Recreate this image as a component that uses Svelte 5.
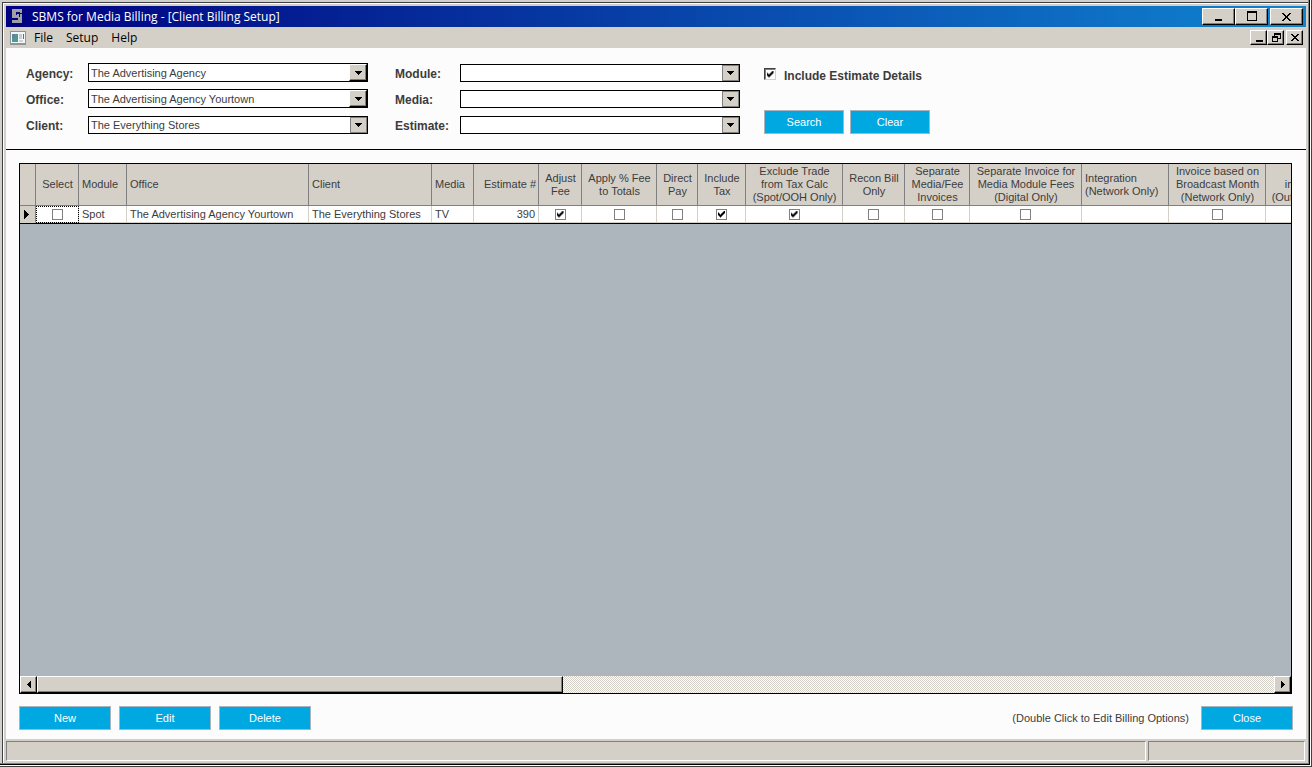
<script lang="ts">
    let agency = $state("The Advertising Agency");
    let office = $state("The Advertising Agency Yourtown");
    let client = $state("The Everything Stores");
    let module = $state("");
    let media = $state("");
    let estimate = $state("");
    let includeDetails = $state(true);

    const columns = [
        { key: "select", title: "Select", width: 43, align: "center", check: true },
        { key: "module", title: "Module", width: 48, align: "left" },
        { key: "office", title: "Office", width: 182, align: "left" },
        { key: "client", title: "Client", width: 123, align: "left" },
        { key: "media", title: "Media", width: 42, align: "left" },
        { key: "estimate", title: "Estimate #", width: 65, align: "right" },
        { key: "adjustFee", title: "Adjust\nFee", width: 43, align: "center", check: true },
        { key: "applyFee", title: "Apply % Fee\nto Totals", width: 75, align: "center", check: true },
        { key: "directPay", title: "Direct\nPay", width: 41, align: "center", check: true },
        { key: "includeTax", title: "Include\nTax", width: 48, align: "center", check: true },
        { key: "excludeTrade", title: "Exclude Trade\nfrom Tax Calc\n(Spot/OOH Only)", width: 97, align: "center", check: true },
        { key: "reconBill", title: "Recon Bill\nOnly", width: 62, align: "center", check: true },
        { key: "separateFee", title: "Separate\nMedia/Fee\nInvoices", width: 65, align: "center", check: true },
        { key: "separateModule", title: "Separate Invoice for\nMedia Module Fees\n(Digital Only)", width: 112, align: "center", check: true },
        { key: "integration", title: "Integration\n(Network Only)", width: 87, align: "left" },
        { key: "broadcastMonth", title: "Invoice based on\nBroadcast Month\n(Network Only)", width: 97, align: "center", check: true },
        { key: "outdoor", title: "\nin Invoice\n(Outdoor Only)", width: 84, align: "center", check: true },
    ];

    let rows: Record<string, any>[] = $state([
        {
            module: "Spot",
            office: "The Advertising Agency Yourtown",
            client: "The Everything Stores",
            media: "TV",
            estimate: "390",
            integration: "",
            select: false,
            adjustFee: true,
            applyFee: false,
            directPay: false,
            includeTax: true,
            excludeTrade: true,
            reconBill: false,
            separateFee: false,
            separateModule: false,
            broadcastMonth: false,
            outdoor: false,
        },
    ]);

    const gridWidth = 16 + columns.reduce((sum, c) => sum + c.width, 0);

    function clearFilters() {
        agency = office = client = module = media = estimate = "";
        includeDetails = false;
    }
</script>

{#snippet arrow(raised: boolean)}
    <span class="arrow" class:raised>
        <svg width="7" height="4" viewBox="0 0 7 4"><path d="M0 0h7v1h-1v1h-1v1h-1v1h-1v-1h-1v-1h-1v-1h-1z" /></svg>
    </span>
{/snippet}

<div class="window">
    <header class="titlebar">
        <svg class="logo" width="12" height="15" viewBox="0 0 12 15">
            <path fill="#a0a0a0" d="M0 0h10v4h-2v-1h-4v3h3v3h-7z M5 5h5v9h-10v-3h6v-3h-1z" />
            <path fill="#000084" d="M4 5h1v1h-1z M7 5h1v3h-1z M0 9h6v1h-6z" />
        </svg>
        <h1>SBMS for Media Billing - [Client Billing Setup]</h1>
        <div class="controls">
            <button aria-label="Minimize">
                <svg width="12" height="11" viewBox="0 0 12 11"><path d="M2 8h7v2h-7z" /></svg>
            </button>
            <button aria-label="Maximize">
                <svg width="12" height="11" viewBox="0 0 12 11"><path fill-rule="evenodd" d="M1 0h10v10h-10z M2 2h8v7h-8z" /></svg>
            </button>
            <button class="close" aria-label="Close window">
                <svg width="9" height="8" viewBox="0 0 9 8"><path d="M0 0h2v1h1v1h1v1h1v-1h1v-1h1v-1h2v1h-1v1h-1v1h-1v2h1v1h1v1h1v1h-2v-1h-1v-1h-1v-1h-1v1h-1v1h-1v1h-2v-1h1v-1h1v-1h1v-2h-1v-1h-1v-1h-1z" /></svg>
            </button>
        </div>
    </header>

    <nav class="menubar">
        <svg class="form-icon" width="16" height="14" viewBox="0 0 16 14">
            <rect width="16" height="14" fill="#8f949c" />
            <rect x="1" y="1" width="14" height="11" fill="#f5f6f8" />
            <rect x="2" y="3" width="6" height="8" fill="#4f9a8c" />
            <rect x="2" y="3" width="3" height="4" fill="#5c86a8" />
            <rect x="9" y="3" width="3" height="5" fill="#c9ccd0" />
            <rect x="13" y="3" width="1" height="5" fill="#5b6f86" />
            <rect x="9" y="9" width="4" height="2" fill="#d2d4d8" />
        </svg>
        <button class="menu">File</button>
        <button class="menu">Setup</button>
        <button class="menu">Help</button>
        <div class="controls small">
            <button aria-label="Minimize form">
                <svg width="10" height="9" viewBox="0 0 10 9"><path d="M2 7h7v2h-7z" /></svg>
            </button>
            <button aria-label="Restore form">
                <svg width="10" height="9" viewBox="0 0 10 9"><path fill-rule="evenodd" d="M3 0h7v6h-3v-1h2v-3h-5v1h-1z M1 3h6v6h-6z M2 5v3h4v-3z" /></svg>
            </button>
            <button class="close" aria-label="Close form">
                <svg width="8" height="7" viewBox="0 0 8 7"><path d="M0 0h2v1h1v1h2v-1h1v-1h2v1h-1v1h-1v1h-1v1h1v1h1v1h1v1h-2v-1h-1v-1h-2v1h-1v1h-2v-1h1v-1h1v-1h1v-1h-1v-1h-1v-1h-1z" /></svg>
            </button>
        </div>
    </nav>

    <section class="filters">
        <div class="fields">
            <label for="agency">Agency:</label>
            <div class="combo tall">
                <select id="agency" bind:value={agency}>
                    <option value=""></option>
                    <option>The Advertising Agency</option>
                </select>
                {@render arrow(true)}
            </div>
            <label for="office">Office:</label>
            <div class="combo tall">
                <select id="office" bind:value={office}>
                    <option value=""></option>
                    <option>The Advertising Agency Yourtown</option>
                </select>
                {@render arrow(true)}
            </div>
            <label for="client">Client:</label>
            <div class="combo">
                <select id="client" bind:value={client}>
                    <option value=""></option>
                    <option>The Everything Stores</option>
                </select>
                {@render arrow(false)}
            </div>
        </div>

        <div class="fields second">
            <label for="module">Module:</label>
            <div class="combo">
                <select id="module" bind:value={module}>
                    <option value=""></option>
                    <option>Spot</option>
                </select>
                {@render arrow(false)}
            </div>
            <label for="media">Media:</label>
            <div class="combo">
                <select id="media" bind:value={media}>
                    <option value=""></option>
                    <option>TV</option>
                </select>
                {@render arrow(false)}
            </div>
            <label for="estimate">Estimate:</label>
            <div class="combo">
                <select id="estimate" bind:value={estimate}>
                    <option value=""></option>
                    <option>390</option>
                </select>
                {@render arrow(false)}
            </div>
        </div>

        <div class="actions">
            <label class="details">
                <input type="checkbox" class="sunken" bind:checked={includeDetails} />
                Include Estimate Details
            </label>
            <div class="buttons">
                <button class="action">Search</button>
                <button class="action" onclick={clearFilters}>Clear</button>
            </div>
        </div>
    </section>

    <main>
        <div class="grid">
            <div class="grid-body">
                <table style="width: {gridWidth}px">
                    <colgroup>
                        <col class="marker-col" />
                        {#each columns as col}
                            <col style="width: {col.width}px" />
                        {/each}
                    </colgroup>
                    <thead>
                        <tr>
                            <th></th>
                            {#each columns as col}
                                <th class={col.align}>{col.title}</th>
                            {/each}
                        </tr>
                    </thead>
                    <tbody>
                        {#each rows as row}
                            <tr>
                                <td class="marker">
                                    <svg width="5" height="9" viewBox="0 0 5 9"><path d="M0 0h1v1h1v1h1v1h1v1h1v1h-1v1h-1v1h-1v1h-1v1h-1z" /></svg>
                                </td>
                                {#each columns as col}
                                    <td class={col.align} class:focused={col.key == "select"}>
                                        {#if col.check}
                                            <input type="checkbox" aria-label={col.title} bind:checked={row[col.key]} />
                                        {:else}
                                            {row[col.key]}
                                        {/if}
                                    </td>
                                {/each}
                            </tr>
                        {/each}
                    </tbody>
                </table>
            </div>
            <div class="scrollbar">
                <button aria-label="Scroll left">
                    <svg width="4" height="7" viewBox="0 0 4 7"><path d="M4 0v7h-1v-1h-1v-1h-1v-1h-1v-1h1v-1h1v-1h1v-1z" /></svg>
                </button>
                <div class="track"><div class="thumb"></div></div>
                <button aria-label="Scroll right">
                    <svg width="4" height="7" viewBox="0 0 4 7"><path d="M0 0v7h1v-1h1v-1h1v-1h1v-1h-1v-1h-1v-1h-1v-1z" /></svg>
                </button>
            </div>
        </div>

        <div class="footer">
            <button class="action wide">New</button>
            <button class="action wide">Edit</button>
            <button class="action wide">Delete</button>
            <span class="hint">(Double Click to Edit Billing Options)</span>
            <button class="action wide">Close</button>
        </div>
    </main>

    <footer class="statusbar">
        <div class="panel"></div>
        <div class="panel side"></div>
    </footer>
</div>

<style>
    :global(body) {
        background: #fff;
    }

    /* stacked one-pixel edges of the classic window frame */
    .window {
        box-sizing: border-box;
        height: 100vh;
        display: flex;
        flex-direction: column;
        padding: 6px 6px 4px;
        box-shadow:
            inset -1px -1px #404040,
            inset -2px -2px #fff,
            inset -3px -3px #000,
            inset -4px -4px #808080,
            inset 2px 2px #d0d0d0,
            inset 3px 3px #404040,
            inset 4px 4px #fff;
        font-family: "Liberation Sans", Arial, sans-serif;
        font-size: 11px;
        color: #3c3c3c;
        background: #d4d0c8;
    }

    svg {
        display: block;
        shape-rendering: crispEdges;
    }

    button,
    select,
    input {
        margin: 0;
        padding: 0;
        border-radius: 0;
        font: inherit;
        color: inherit;
    }

    .titlebar {
        display: flex;
        align-items: center;
        height: 21px;
        padding: 0 3px 0 6px;
        background: linear-gradient(90deg, #000080, #1084d0);
    }

    .logo {
        margin-right: 8px;
    }

    h1 {
        flex: 1;
        margin: 0;
        font: 12px/20px "Open Sans", sans-serif;
        color: #fff;
    }

    .controls {
        display: flex;
    }
    .controls button {
        display: flex;
        align-items: center;
        justify-content: center;
        box-sizing: border-box;
        width: 33px;
        height: 17px;
        border: 1px solid #000;
        border-color: #fff #000 #000 #fff;
        box-shadow: inset -1px -1px #808080;
        background: #d4d0c8;
    }
    .controls .close {
        width: 33px;
        margin-left: 2px;
    }
    .controls.small {
        margin-left: auto;
    }
    .controls.small button {
        width: 17px;
        height: 15px;
    }

    .menubar {
        display: flex;
        align-items: center;
        height: 21px;
        padding: 0 3px 0 4px;
    }

    .menu {
        margin-left: 8px;
        border: 0;
        background: none;
        font: 12px/20px "Open Sans", sans-serif;
        color: #000;
    }
    .menu + .menu {
        margin-left: 13px;
    }

    .filters {
        display: flex;
        padding: 8px 20px 15px;
        border-bottom: 1px solid #000;
        background: #fcfcfc;
    }

    .fields {
        display: grid;
        grid-template-columns: 62px 280px;
        grid-auto-rows: 26px;
        align-items: end;
    }
    .fields.second {
        grid-template-columns: 65px 280px;
        margin: 0 24px 0 27px;
    }

    label {
        font-size: 12px;
        font-weight: bold;
        line-height: 16px;
    }

    .combo {
        display: grid;
        box-sizing: border-box;
        height: 18px;
        border: 1px solid #000;
        background: #fff;
    }
    .combo.tall {
        height: 19px;
    }
    .combo select {
        grid-area: 1 / 1;
        width: 100%;
        padding-left: 2px;
        border: 0;
        appearance: none;
        background: none;
    }

    .arrow {
        grid-area: 1 / 1;
        justify-self: end;
        display: flex;
        align-items: center;
        justify-content: center;
        box-sizing: border-box;
        width: 17px;
        border: 1px solid #808080;
        background: #d4d0c8;
        pointer-events: none;
    }
    .arrow.raised {
        width: 18px;
        border-color: #fff #000 #000 #fff;
        box-shadow: inset -1px -1px #808080;
    }

    .actions {
        display: flex;
        flex-direction: column;
        justify-content: space-between;
        padding-top: 12px;
    }

    .details {
        display: flex;
        align-items: flex-start;
        gap: 8px;
    }

    .buttons {
        display: flex;
        gap: 6px;
    }

    .action {
        width: 80px;
        height: 24px;
        border: 1px solid #a9b4bf;
        color: #fff;
        background: #00a8e1;
    }
    .action.wide {
        width: 92px;
    }

    input[type="checkbox"] {
        display: grid;
        place-content: center;
        box-sizing: border-box;
        width: 11px;
        height: 11px;
        border: 1px solid #808080;
        appearance: none;
        background: #fff;
    }
    input[type="checkbox"].sunken {
        width: 12px;
        height: 12px;
        border-color: #404040 #d4d0c8 #d4d0c8 #404040;
        box-shadow: inset 1px 1px #808080;
    }
    input[type="checkbox"]:checked::before {
        content: "";
        width: 7px;
        height: 7px;
        background: #000;
        clip-path: polygon(0 2px, 1px 2px, 1px 3px, 2px 3px, 2px 4px, 3px 4px, 3px 3px, 4px 3px, 4px 2px, 5px 2px, 5px 1px, 6px 1px, 6px 0, 7px 0, 7px 3px, 6px 3px, 6px 4px, 5px 4px, 5px 5px, 4px 5px, 4px 6px, 3px 6px, 3px 7px, 2px 7px, 2px 6px, 1px 6px, 1px 5px, 0 5px);
    }

    main {
        flex: 1;
        display: flex;
        flex-direction: column;
        min-height: 0;
        padding: 13px 13px 9px;
        background: #fcfcfc;
    }

    .grid {
        flex: 1;
        display: flex;
        flex-direction: column;
        min-height: 0;
        margin-right: 1px;
        border: 1px solid #000;
        background: #adb5bd;
    }

    .grid-body {
        flex: 1;
        overflow: hidden;
    }

    table {
        table-layout: fixed;
        border-collapse: separate;
        border-spacing: 0;
        border-bottom: 1px solid #000;
    }

    .marker-col {
        width: 16px;
    }

    th,
    td {
        box-sizing: border-box;
        padding: 0 3px;
        border-right: 1px solid #d4d0c8;
        border-bottom: 1px solid #d4d0c8;
        background: #fff;
        text-align: left;
        white-space: pre;
    }
    th {
        height: 42px;
        padding: 0 2px 0 3px;
        border-color: #808080;
        background: #d4d0c8;
        font-weight: normal;
        line-height: 13px;
    }
    td {
        height: 17px;
        line-height: 16px;
        white-space: nowrap;
    }
    .center {
        text-align: center;
    }
    .right {
        text-align: right;
    }
    td input[type="checkbox"] {
        margin: 0 auto;
    }
    td.marker {
        padding: 0 4px;
        border-right-color: #808080;
        background: #d4d0c8;
    }
    td.focused {
        outline: 1px dotted #000;
        outline-offset: -1px;
    }

    .scrollbar {
        display: flex;
        height: 17px;
    }
    .scrollbar button,
    .thumb {
        display: flex;
        align-items: center;
        justify-content: center;
        box-sizing: border-box;
        width: 17px;
        border: 1px solid #000;
        border-color: #fff #000 #000 #fff;
        box-shadow: inset -1px -1px #808080;
        background: #d4d0c8;
    }
    .track {
        flex: 1;
        display: flex;
        background: repeating-conic-gradient(#d4d0c8 0 25%, #fff 0 50%) 0 0 / 2px 2px;
    }
    .scrollbar .thumb {
        width: 42.5%;
    }

    .footer {
        display: flex;
        align-items: center;
        gap: 8px;
        padding-top: 12px;
    }

    .hint {
        flex: 1;
        margin-right: 4px;
        text-align: right;
    }

    .statusbar {
        display: flex;
        gap: 2px;
        box-sizing: border-box;
        height: 24px;
        padding: 2px 1px 2px 0;
    }
    .panel {
        flex: 1;
        border: 1px solid #fff;
        border-color: #808080 #fff #fff #808080;
    }
    .panel.side {
        flex: 0 0 155px;
    }
</style>
